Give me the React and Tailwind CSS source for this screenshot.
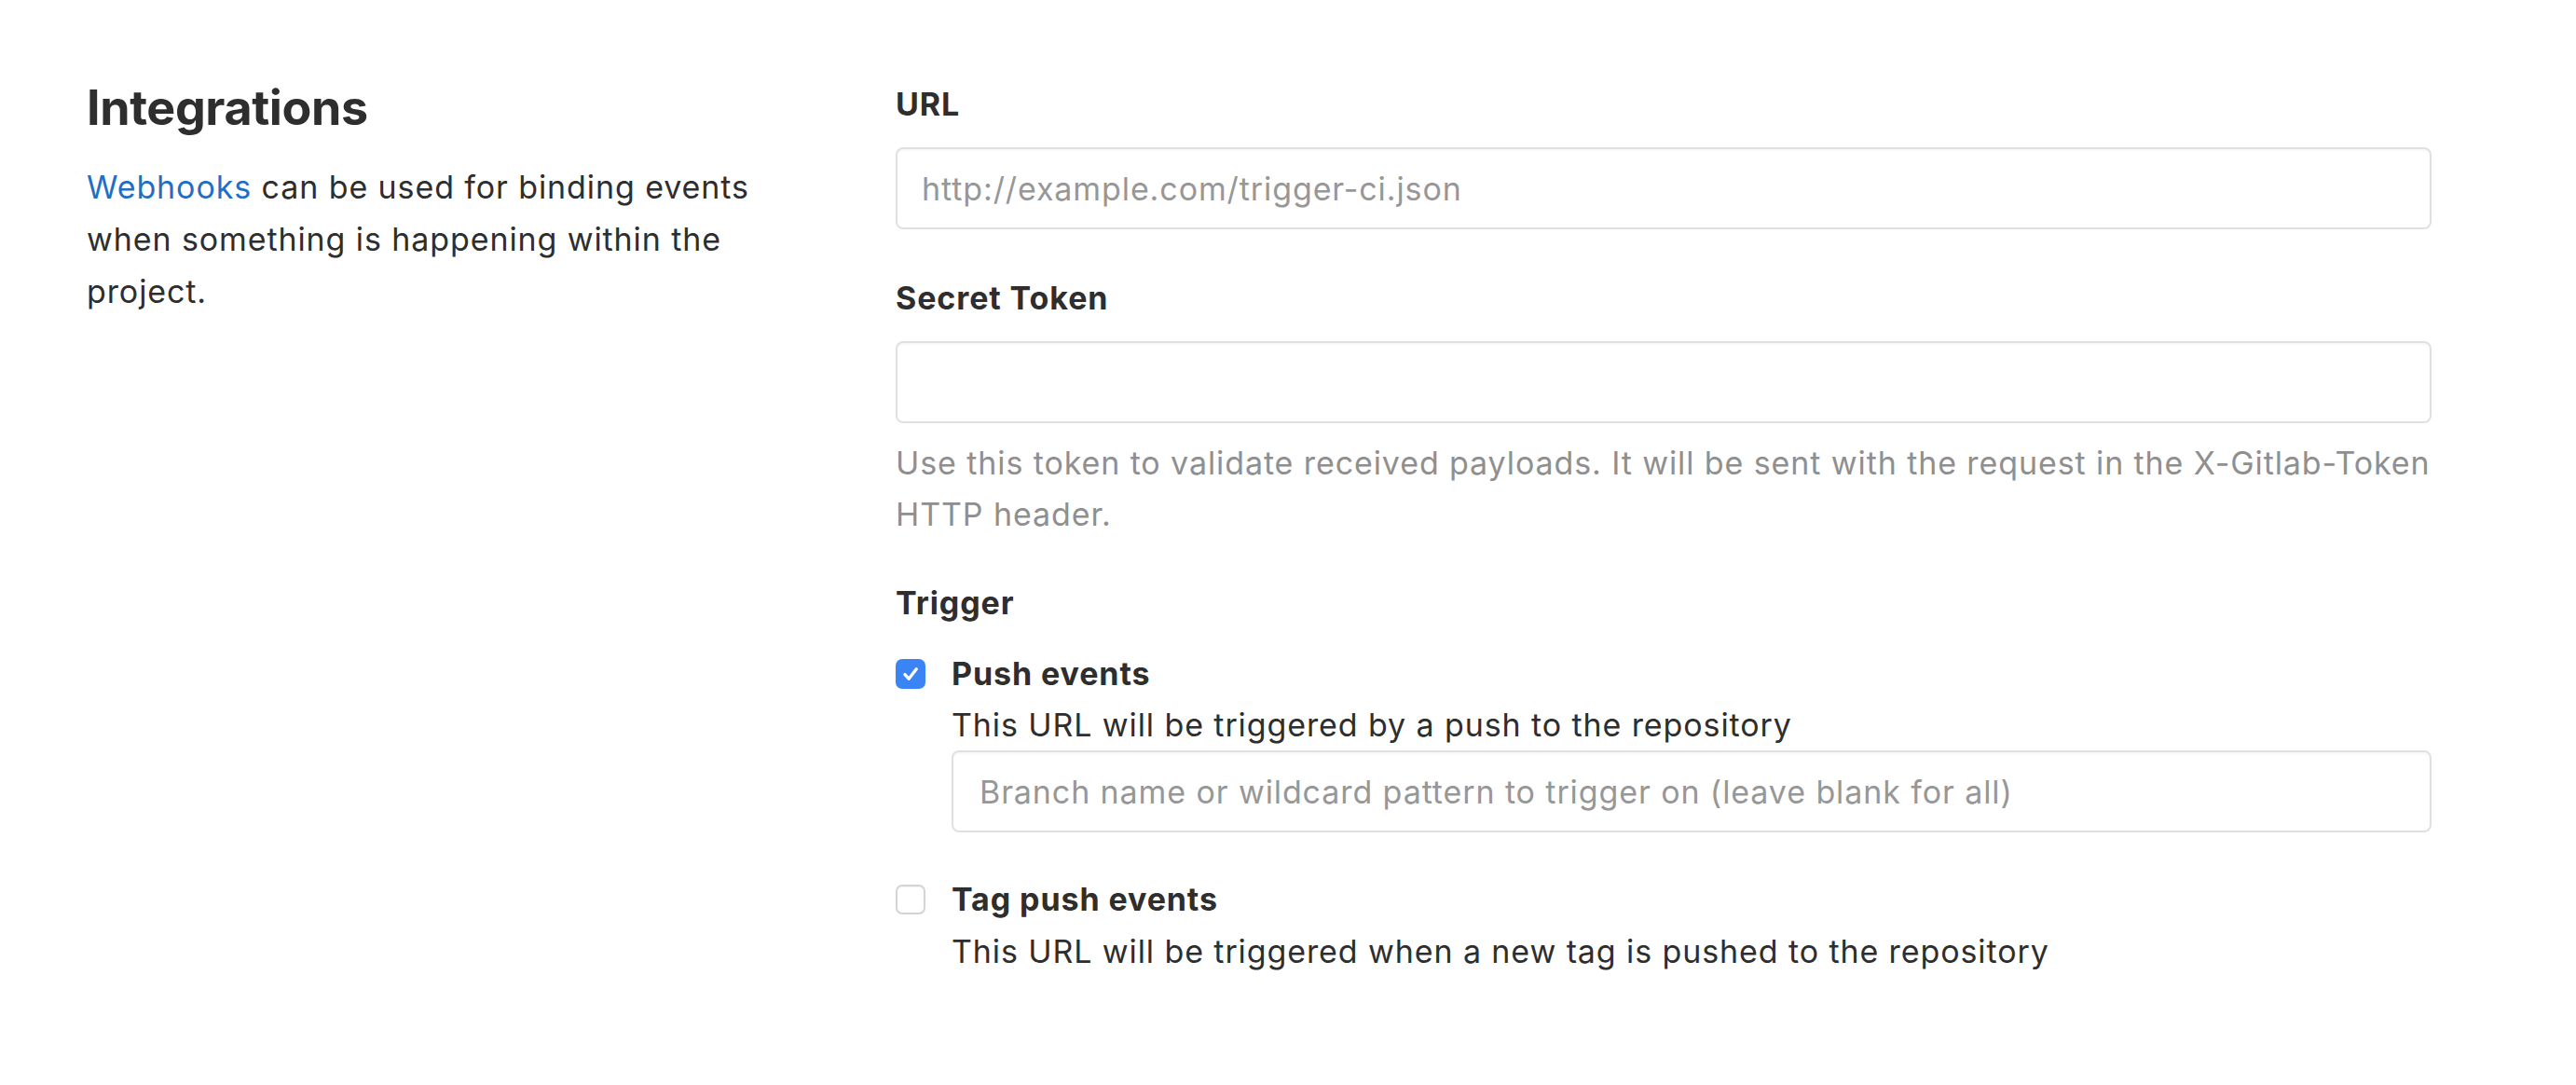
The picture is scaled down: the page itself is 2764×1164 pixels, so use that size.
import React from "react";

function Checkbox({ checked }) {
  if (checked) {
    return (
      <span className="mt-[12px] flex h-[32px] w-[32px] shrink-0 items-center justify-center rounded-[7px] bg-[#3b84f6]">
        <svg width="22" height="22" viewBox="0 0 20 20" fill="none">
          <path d="M4.5 10.5l3.8 4.3 7.4-9.6" stroke="#ffffff" strokeWidth="3" strokeLinecap="round" strokeLinejoin="round" />
        </svg>
      </span>
    );
  }
  return (
    <span className="mt-[12px] block h-[32px] w-[32px] shrink-0 rounded-[7px] border-2 border-[#d4d4d4] bg-white shadow-[inset_0_1px_1px_rgba(0,0,0,0.06)]" />
  );
}

function TextInput({ placeholder, className = "" }) {
  return (
    <input
      type="text"
      placeholder={placeholder}
      className={
        "block h-[88px] w-full rounded-[8px] border-2 border-[#e0e0e0] bg-white px-[26px] text-[34px] tracking-[0.9px] text-[#2e2e2e] outline-none placeholder:text-[#979797] shadow-[inset_0_2px_2px_rgba(0,0,0,0.03)] " +
        className
      }
    />
  );
}

export default function App() {
  return (
    <div className="flex min-h-[1164px] w-[2764px] bg-white pl-[93px] font-[Inter,sans-serif] text-[#2e2e2e] antialiased">
      <div className="w-[868px] shrink-0 pt-[84px]">
        <h4 className="text-[52px] font-bold leading-[64px] tracking-[-0.4px] text-[#2e2e2e]">Integrations</h4>
        <p className="mt-[25px] w-[750px] text-[34px] leading-[56px] tracking-[0.9px]">
          <span className="text-[#1f6fc4]">Webhooks</span> can be used for binding events when something is happening within the project.
        </p>
      </div>
      <div className="w-[1648px] shrink-0 pt-[84px] text-[34px] tracking-[0.9px]">
        <label className="block font-bold leading-[56px]">URL</label>
        <TextInput placeholder="http://example.com/trigger-ci.json" className="mt-[18px]" />

        <label className="mt-[46px] block font-bold leading-[56px]">Secret Token</label>
        <TextInput placeholder="" className="mt-[18px]" />
        <p className="mt-[15px] leading-[55px] text-[#8f8f8f]">
          Use this token to validate received payloads. It will be sent with the request in the X-Gitlab-Token HTTP header.
        </p>

        <div className="mt-[40px] font-bold leading-[56px]">Trigger</div>

        <div className="mt-[20px] flex gap-[28px]">
          <Checkbox checked />
          <div className="flex-1">
            <div className="font-bold leading-[56px]">Push events</div>
            <div className="leading-[54px]">This URL will be triggered by a push to the repository</div>
            <TextInput placeholder="Branch name or wildcard pattern to trigger on (leave blank for all)" className="px-[28px]" />
          </div>
        </div>

        <div className="mt-[44px] flex gap-[28px]">
          <Checkbox />
          <div className="flex-1">
            <div className="font-bold leading-[56px]">Tag push events</div>
            <div className="leading-[56px]">This URL will be triggered when a new tag is pushed to the repository</div>
          </div>
        </div>
      </div>
    </div>
  );
}
